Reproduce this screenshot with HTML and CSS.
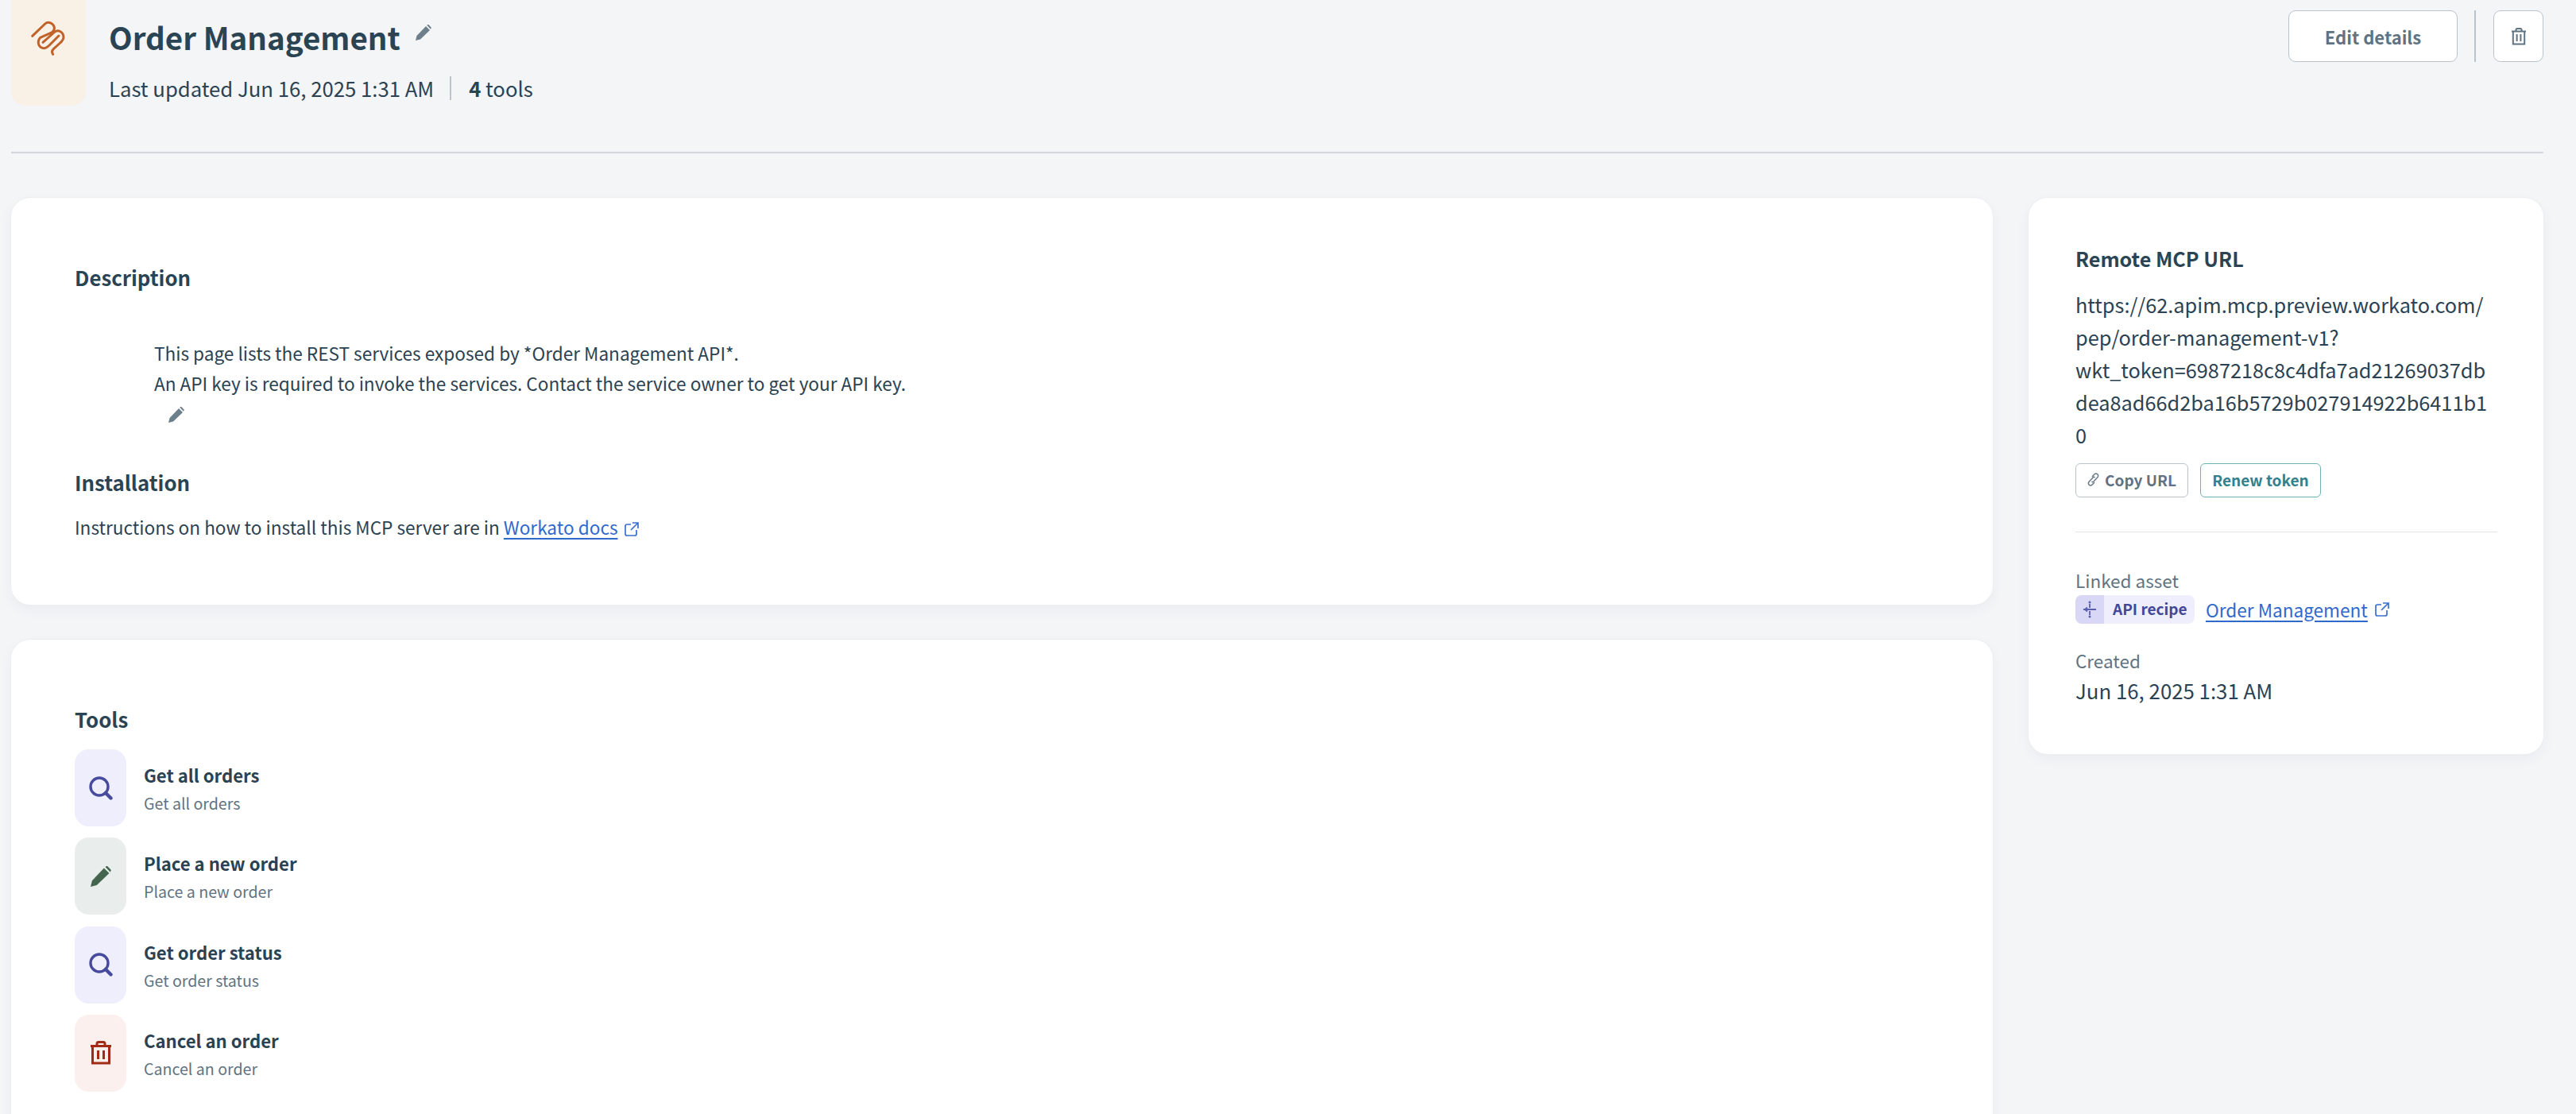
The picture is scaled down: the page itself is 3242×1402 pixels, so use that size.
FILE: index.html
```html
<!DOCTYPE html>
<html lang="en">
<head>
<meta charset="utf-8">
<title>Order Management</title>
<link rel="stylesheet" href="styles.css">
</head>
<body>
<div class="page">
  <header class="header">
    <div class="logo">
      <svg width="94" height="90" viewBox="0 0 282 270" fill="none" stroke="#c0622a" stroke-width="9" stroke-linecap="round" stroke-linejoin="round"><path d="M80 136 L128 90 C140 78 160 88 163 103 C165 112 160 117 155 122 L110 142 C95 160 105 182 125 182 C135 182 145 170 150 165 L180 135 M120 160 L165 120 C178 110 197 122 198 140 C198 150 190 157 185 162 L160 185 C153 192 153 198 158 205"/></svg>
    </div>
    <div class="heading">
      <div class="title-row">
        <h1 class="title">Order Management</h1>
        <svg class="pencil-title" width="20" height="20" viewBox="0 0 20 20"><path fill="#6e7f8c" d="M0 20 L1.5 14 L13 2 L18 7 L6 18.5 Z M14.2 .8 L15.4 0 Q16 -.2 16.6 .3 L19.6 3.4 Q20 4 19.6 4.6 L19 5.7 Z"/></svg>
      </div>
      <div class="meta">
        <span>Last updated Jun 16, 2025 1:31 AM</span>
        <span class="meta-sep"></span>
        <span><b class="meta-count">4</b> tools</span>
      </div>
    </div>
    <div class="actions">
      <button class="btn btn-edit">Edit details</button>
      <span class="action-sep"></span>
      <button class="btn btn-trash">
        <svg width="20" height="22" viewBox="0 0 20 22" fill="none" stroke="#5f7382" stroke-width="2"><path d="M1 4.5 H19 M6.5 4.5 V2.5 Q6.5 1 8 1 H12 Q13.500 1 13.500 2.500 V4.500 M2.800 4.500 V20.500 H17.200 V4.500 M7.600 8 V17 M12.400 8 V17"/></svg>
      </button>
    </div>
  </header>

  <main class="layout">
    <div class="col-main">
      <section class="card card-desc">
        <h2 class="section-title">Description</h2>
        <div class="desc-body">
          <p class="desc-line">This page lists the REST services exposed by *Order Management API*.</p>
          <p class="desc-line">An API key is required to invoke the services. Contact the service owner to get your API key.</p>
          <svg class="pencil-desc" width="20" height="20" viewBox="0 0 20 20"><path fill="#6e7f8c" d="M0 20 L1.5 14 L13 2 L18 7 L6 18.5 Z M14.2 .8 L15.4 0 Q16 -.2 16.6 .3 L19.6 3.4 Q20 4 19.6 4.6 L19 5.7 Z"/></svg>
        </div>
        <h2 class="section-title install-title">Installation</h2>
        <p class="install-line">Instructions on how to install this MCP server are in <a class="link" href="#">Workato docs</a><svg class="ext" width="18" height="18" viewBox="0 0 18 18" fill="none" stroke="#3a6fd0" stroke-width="1.700"><path d="M8 3 H3 Q1 3 1 5 V15 Q1 17 3 17 H13 Q15 17 15 15 V10 M10 1 H17 V8 M17 1 L8 10"/></svg></p>
      </section>

      <section class="card card-tools">
        <h2 class="section-title">Tools</h2>
        <ul class="tool-list">
          <li class="tool">
            <span class="tool-icon tool-icon-read"><svg width="30" height="30" viewBox="0 0 30 30" fill="none" stroke="#474b9e" stroke-width="3.400"><circle cx="13" cy="13" r="11"/><path d="M21 21 L27.500 27.500" stroke-width="4.400" stroke-linecap="round"/></svg></span>
            <div class="tool-text"><div class="tool-name">Get all orders</div><div class="tool-sub">Get all orders</div></div>
          </li>
          <li class="tool">
            <span class="tool-icon tool-icon-write"><svg width="26" height="26" viewBox="0 0 20 20"><path fill="#44664f" d="M0 20 L1.500 14 L13 2 L18 7 L6 18.500 Z M14.200 .8 L15.400 0 Q16 -.2 16.600 .3 L19.600 3.400 Q20 4 19.600 4.600 L19 5.700 Z"/></svg></span>
            <div class="tool-text"><div class="tool-name">Place a new order</div><div class="tool-sub">Place a new order</div></div>
          </li>
          <li class="tool">
            <span class="tool-icon tool-icon-read"><svg width="30" height="30" viewBox="0 0 30 30" fill="none" stroke="#474b9e" stroke-width="3.400"><circle cx="13" cy="13" r="11"/><path d="M21 21 L27.500 27.500" stroke-width="4.400" stroke-linecap="round"/></svg></span>
            <div class="tool-text"><div class="tool-name">Get order status</div><div class="tool-sub">Get order status</div></div>
          </li>
          <li class="tool">
            <span class="tool-icon tool-icon-delete"><svg width="28" height="30" viewBox="0 0 28 30" fill="none" stroke="#a22b17" stroke-width="3"><path d="M1 6.500 H27 M9 6.500 V3.500 Q9 1.500 11 1.500 H17 Q19 1.500 19 3.500 V6.500 M3.500 6.500 V28 H24.500 V6.500 M10.500 12 V23 M17.500 12 V23"/></svg></span>
            <div class="tool-text"><div class="tool-name">Cancel an order</div><div class="tool-sub">Cancel an order</div></div>
          </li>
        </ul>
      </section>
    </div>

    <aside class="card card-side">
      <h2 class="side-title">Remote MCP URL</h2>
      <p class="url">https://62.apim.mcp.preview.workato.com/<br>pep/order-management-v1?wkt_token=6987218c8c4dfa7ad21269037dbdea8ad66d2ba16b5729b027914922b6411b10</p>
      <div class="url-actions">
        <button class="mini mini-copy"><svg width="15" height="17" viewBox="0 0 15 17" fill="none" stroke="#6b7d8a" stroke-width="1.500"><path d="M6 5 L9 1.800 Q11 .4 12.800 1.800 Q14.400 3.600 13 5.500 L8 11 Q6.600 12.200 5.500 11 M9 12 L6 15.200 Q4 16.600 2.200 15.200 Q.6 13.400 2 11.500 L7 6 Q8.400 4.800 9.500 6"/></svg>Copy URL</button>
        <button class="mini mini-renew">Renew token</button>
      </div>
      <hr class="side-rule">
      <div class="side-label">Linked asset</div>
      <div class="asset-row">
        <span class="chip">
          <span class="chip-icon"><svg width="18" height="24" viewBox="0 0 18 24" fill="none" stroke="#5a5fb0" stroke-width="1.800"><path d="M1 12 H17 M9 5 V10 M9 14 V19 M6 9.500 L3 12 L6 14.500"/><circle cx="9" cy="3" r="1.500" fill="#5a5fb0" stroke="none"/><circle cx="9" cy="21" r="1.500" fill="#5a5fb0" stroke="none"/></svg></span>
          <span class="chip-text">API recipe</span>
        </span>
        <a class="link" href="#">Order Management</a><svg class="ext" width="18" height="18" viewBox="0 0 18 18" fill="none" stroke="#3a6fd0" stroke-width="1.700"><path d="M8 3 H3 Q1 3 1 5 V15 Q1 17 3 17 H13 Q15 17 15 15 V10 M10 1 H17 V8 M17 1 L8 10"/></svg>
      </div>
      <div class="side-label created-label">Created</div>
      <div class="created">Jun 16, 2025 1:31 AM</div>
    </aside>
  </main>
</div>
</body>
</html>
```
FILE: styles.css
```css
* { box-sizing: border-box; }
html, body { margin: 0; padding: 0; height: 100%; overflow: hidden; }
body {
  background: #f4f5f7;
  color: #2b4252;
  font-family: "Noto Sans CJK SC", "Noto Sans", sans-serif;
}
.page { padding: 0 41px 0 14px; height: 1402px; overflow: hidden; }

.header {
  display: flex;
  height: 193px;
  border-bottom: 2px solid #d2d7dd;
}
.logo {
  width: 94px;
  height: 133px;
  background: #f9f0e6;
  border-radius: 0 0 18px 18px;
}
.logo svg { display: block; }
.heading { margin-left: 29px; flex: 1; padding-top: 21px; }
.title-row { display: flex; align-items: center; height: 50px; }
.title { margin: 0; font-size: 38.5px; font-weight: 700; color: #2b4454; line-height: 50px; }
.pencil-title { margin: -10px 0 0 19px; }
.meta { display: flex; align-items: center; margin-top: 25px; font-size: 25.7px; line-height: 30px; }
.meta-sep { width: 2px; height: 30px; background: #bcc5cd; margin: 0 22px 0 20px; }
.meta-count { font-weight: 700; }
.actions { display: flex; padding-top: 13px; height: 78px; align-items: stretch; }
.btn {
  background: #fff;
  border: 1px solid #b9c3cc;
  border-radius: 9px;
  font: inherit;
  padding: 0;
  display: flex;
  align-items: center;
  justify-content: center;
}
.btn-edit { width: 213px; color: #5f7382; font-size: 22px; font-weight: 700; }
.action-sep { width: 2px; background: #b9c3cc; margin: 0 22px 0 21px; }
.btn-trash { width: 63px; }

.layout {
  display: grid;
  grid-template-columns: 2494px 648px;
  column-gap: 45px;
  align-items: start;
  padding-top: 56px;
}
.col-main { display: flex; flex-direction: column; gap: 44px; }
.card {
  background: #fff;
  border-radius: 24px;
  box-shadow: 0 0 0 1px #eceef1, 0 6px 16px rgba(40, 60, 80, .05);
}
.card-desc { height: 512px; padding: 82px 80px 0; }
.card-tools { height: 700px; padding: 82px 80px 0; }
.section-title { margin: 0; font-size: 25.8px; line-height: 36px; font-weight: 700; color: #2b4454; }
.desc-body { padding: 59px 0 0 100px; font-size: 22.6px; line-height: 38px; }
.desc-line { margin: 0; }
.pencil-desc { display: block; margin: 10px 0 0 18px; }
.install-title { margin-top: 57px; }
.install-line { margin: 20px 0 0; font-size: 22.6px; line-height: 38px; }
.link { color: #2f69cc; text-decoration: underline; text-underline-offset: 4px; }
.ext { margin-left: 9px; vertical-align: -2px; }

.tool-list { list-style: none; margin: 20px 0 0; padding: 0; display: flex; flex-direction: column; gap: 14.3px; }
.tool { display: flex; align-items: stretch; height: 97px; }
.tool-icon { width: 65px; border-radius: 18px; display: flex; align-items: center; justify-content: center; }
.tool-icon-read { background: #efeefd; }
.tool-icon-write { background: #e9eeec; }
.tool-icon-delete { background: #fcf0ee; }
.tool-text { margin-left: 22px; padding-top: 15px; }
.tool-name { font-size: 22.1px; line-height: 34px; font-weight: 700; color: #2b4252; }
.tool-sub { font-size: 19.6px; line-height: 30px; margin-top: 4px; color: #5f7382; }

.card-side { height: 700px; padding: 58px 58px 0 59px; }
.side-title { margin: 0; font-size: 25.1px; line-height: 36px; font-weight: 600; color: #2b4454; }
.url { margin: 20px 0 0; font-size: 25.3px; line-height: 41px; overflow-wrap: anywhere; }
.url-actions { display: flex; gap: 15px; margin-top: 15px; }
.mini {
  height: 43px;
  background: #fff;
  border-radius: 6px;
  font: inherit;
  font-size: 19px;
  font-weight: 700;
  padding: 0 0 2px;
  display: flex;
  align-items: center;
  justify-content: center;
}
.mini-copy { width: 142px; color: #5f7382; border: 1px solid #b9c3cc; gap: 7px; }
.mini-renew { width: 152px; color: #34808c; border: 1px solid #6fb3b8; }
.side-rule { border: 0; border-top: 1px solid #e4e7ea; margin: 43px 0 0; }
.side-label { font-size: 22.5px; line-height: 32px; color: #5f7382; margin-top: 44px; }
.asset-row { display: flex; align-items: center; height: 36px; margin-top: 3px; font-size: 22.6px; }
.chip { display: flex; height: 36px; border-radius: 8px; background: #efeefd; overflow: hidden; margin-right: 14px; }
.chip-icon { width: 36px; background: #d8d8f6; display: flex; align-items: center; justify-content: center; }
.chip-text { width: 114px; padding-left: 11px; font-size: 19px; line-height: 34px; font-weight: 700; color: #43479a; white-space: nowrap; }
.created-label { margin-top: 30px; }
.created { font-size: 25.8px; line-height: 38px; margin-top: 3px; color: #2b4252; }
```
